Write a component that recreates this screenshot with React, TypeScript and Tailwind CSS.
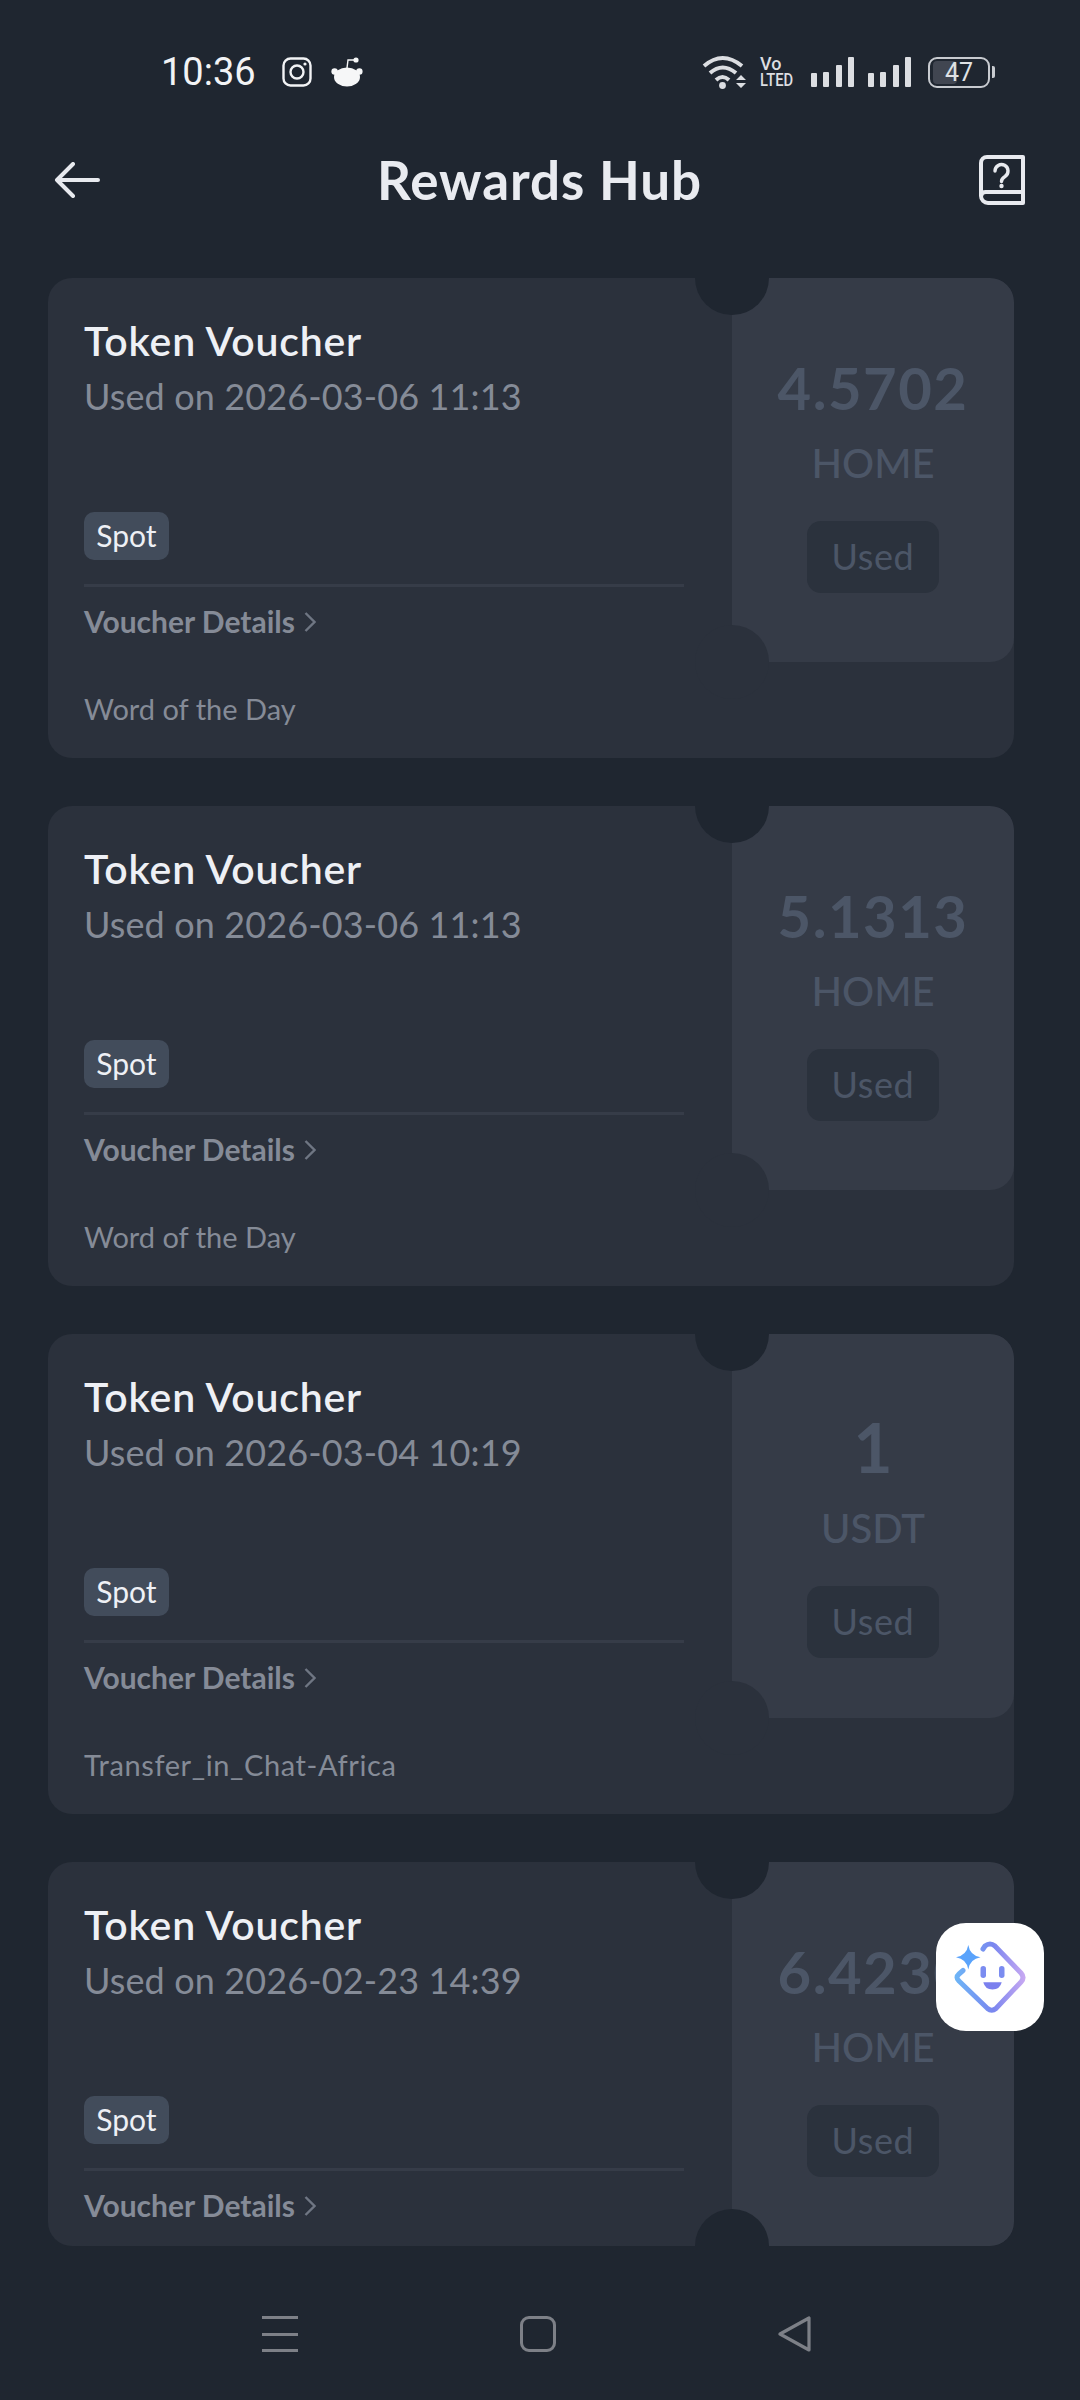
const vouchers = [
  { amount: "4.5702", token: "HOME", date: "2026-03-06 11:13", source: "Word of the Day" },
  { amount: "5.1313", token: "HOME", date: "2026-03-06 11:13", source: "Word of the Day" },
  { amount: "1", token: "USDT", date: "2026-03-04 10:19", source: "Transfer_in_Chat-Africa", big: true, sourceTracking: "tracking-[0.6px]" },
  { amount: "6.4230", token: "HOME", date: "2026-02-23 14:39" },
];

function Signal() {
  return (
    <div className="flex h-[30px] w-[43px] items-end justify-between">
      <div className="h-[14px] w-[6px] rounded-[1px] bg-[#dcdee2]" />
      <div className="h-[15px] w-[6px] rounded-[1px] bg-[#dcdee2]" />
      <div className="h-[22px] w-[6px] rounded-[1px] bg-[#dcdee2]" />
      <div className="h-[30px] w-[6px] rounded-[1px] bg-[#dcdee2]" />
    </div>
  );
}

function StatusBar() {
  return (
    <div className="flex h-[126px] items-start justify-between pl-[161px] pr-[85px] pt-[57px]">
      <div className="flex h-[30px] items-center">
        <span className="font-['Roboto',sans-serif] text-[38px] leading-[30px] text-[#f2f3f5]">10:36</span>
        <svg className="ml-[26px]" width="30" height="30" viewBox="0 0 30 30" fill="none" stroke="#f2f3f5" strokeWidth="2.4">
          <rect x="1.5" y="1.5" width="27" height="27" rx="7" />
          <circle cx="15" cy="15" r="6.5" />
          <circle cx="23" cy="7" r="1.6" fill="#f2f3f5" stroke="none" />
        </svg>
        <svg className="ml-[19px]" width="32" height="30" viewBox="0 0 32 30" fill="#f6f7f8">
          <ellipse cx="16" cy="20" rx="13" ry="9.5" />
          <circle cx="3.6" cy="14.5" r="3.2" />
          <circle cx="28.4" cy="14.5" r="3.2" />
          <circle cx="25" cy="3" r="2.6" />
          <path d="M16 11 L17 3 L24 3" fill="none" stroke="#f6f7f8" strokeWidth="1.4" />
        </svg>
      </div>
      <div className="flex h-[30px] items-center">
        <svg width="45" height="34" viewBox="0 0 45 34" fill="none" stroke="#dcdee2" strokeWidth="4">
          <path d="M2 11 Q20.5 -5 40 11" />
          <path d="M8 18 Q20.5 7 34 18" />
          <path d="M14 25 Q20.5 19 27 25" />
          <circle cx="20.5" cy="30.5" r="3.4" fill="#dcdee2" stroke="none" />
          <path d="M34 25 L39 20 L44 25 Z M34 28 L44 28 L39 33 Z" fill="#dcdee2" stroke="none" />
        </svg>
        <div className="ml-[13px] flex h-[32px] w-[35px] flex-col font-['Roboto',sans-serif] text-[18px] font-medium leading-[16px] text-[#dcdee2]">
          <span>Vo</span>
          <span className="origin-left scale-x-[0.82] whitespace-nowrap">LTED</span>
        </div>
        <div className="ml-[16px]">
          <Signal />
        </div>
        <div className="ml-[14px]">
          <Signal />
        </div>
        <div className="relative ml-[17px] flex h-[31px] w-[62px] items-center justify-center overflow-hidden rounded-[9px] border-2 border-[#c8cbd0]">
          <div className="absolute bottom-[2px] left-[3px] top-[2px] w-[24px] rounded-[4px] bg-[#414651]" />
          <span className="relative font-['Roboto',sans-serif] text-[25px] leading-none text-[#dfe1e4]">47</span>
        </div>
        <div className="ml-[2px] h-[12px] w-[3px] rounded-r-[2px] bg-[#c8cbd0]" />
      </div>
    </div>
  );
}

function Header() {
  return (
    <div className="flex h-[108px] items-center justify-between pl-[54px] pr-[55px]">
      <svg width="46" height="36" viewBox="0 0 46 36" fill="none" stroke="#e8eaef" strokeWidth="4" strokeLinecap="round" strokeLinejoin="round">
        <path d="M3 18 H44 M19 2 L3 18 L19 34" />
      </svg>
      <h1 className="pb-[2px] text-[53px] font-bold leading-none tracking-[0.9px] text-[#e9ebf0]">Rewards Hub</h1>
      <svg width="46" height="50" viewBox="0 0 46 50" fill="none" stroke="#e8eaef" strokeWidth="4" strokeLinejoin="round" strokeLinecap="round">
        <path d="M2 41 V8 a6 6 0 0 1 6 -6 H44 V48 H9 a7 7 0 0 1 -7 -7 a5 5 0 0 1 5 -4 H44" />
        <path d="M16 16 a6.5 6.5 0 1 1 10 5.5 c-2.5 1.5 -3.5 2.5 -3.5 5" strokeWidth="3.4" />
        <circle cx="22.5" cy="31" r="2.2" fill="#e8eaef" stroke="none" />
      </svg>
    </div>
  );
}

function VoucherCard({ amount, token, date, source, big, sourceTracking }: { amount: string; token: string; date: string; source?: string; big?: boolean; sourceTracking?: string }) {
  return (
    <div className="relative shrink-0 overflow-hidden rounded-[24px] bg-[#2b313c]">
      <div className="flex h-[384px]">
        <div className="w-[684px] pl-[36px]">
          <div className="pt-[39px] text-[41px] font-semibold leading-[48px] tracking-[0.8px] text-[#eef0f5]">Token Voucher</div>
          <div className="mt-[9px] text-[36px] leading-[44px] tracking-[0.12px] text-[#858b97]">Used on {date}</div>
          <div className="mt-[94px] flex h-[48px] w-[85px] items-center justify-center rounded-[10px] bg-[#424c5b] pb-[2px] text-[30px] leading-none text-[#eef0f5]">
            Spot
          </div>
          <div className="mt-[24px] h-[3px] w-[600px] bg-[#363c48]" />
          <div className="mt-[17px] flex h-[36px] items-center text-[30px] font-bold leading-none text-[#858b97]">
            <span className="pb-[2px]">Voucher Details</span>
            <svg className="ml-[9px]" width="12" height="20" viewBox="0 0 12 20" fill="none" stroke="#6f7683" strokeWidth="2.4">
              <path d="M1.5 1 L10.5 10 L1.5 19" />
            </svg>
          </div>
        </div>
        <div className="flex w-[282px] flex-col items-center rounded-r-[24px] bg-[#353b47] text-[#4c5667]">
          <div className={big ? "pt-[76px] text-[68px] font-bold leading-[73px]" : "pt-[80px] text-[58px] font-bold leading-[60px] tracking-[1.5px]"}>{amount}</div>
          <div className="mt-[21px] text-[40px] font-medium leading-[48px]">{token}</div>
          <div className="mt-[34px] flex h-[72px] w-[132px] items-center justify-center rounded-[14px] bg-[#2b323d] pb-[2px] text-[36px] leading-none tracking-[0.6px]">
            Used
          </div>
        </div>
      </div>
      {source ? (
        <div className={`flex h-[96px] items-center pb-[3px] pl-[36px] text-[29px] leading-none text-[#858b97] ${sourceTracking ?? ""}`}>{source}</div>
      ) : null}
      {/* ticket notches */}
      <div className="absolute left-[647px] top-[-37px] h-[74px] w-[74px] rounded-full bg-[#1f2630]" />
      <div className={source ? "absolute left-[647px] top-[347px] h-[74px] w-[74px] rounded-full bg-[#2b313c]" : "absolute left-[647px] top-[347px] h-[74px] w-[74px] rounded-full bg-[#1f2630]"} />
    </div>
  );
}

function AssistantButton() {
  return (
    <div className="absolute left-[936px] top-[1923px] h-[108px] w-[108px] rounded-[30px] bg-white">
      <svg width="108" height="108" viewBox="0 0 108 108" fill="none">
        <defs>
          <linearGradient id="face" x1="20" y1="54" x2="88" y2="54" gradientUnits="userSpaceOnUse">
            <stop offset="0" stopColor="#6db4f6" />
            <stop offset="0.55" stopColor="#7a86ef" />
            <stop offset="1" stopColor="#c6a8f2" />
          </linearGradient>
        </defs>
        <path
          d="M27 47.5 L23 51 Q19 54.5 23 58 L51.5 85.5 Q55.7 89 60 85.5 L85 59 Q89 54.5 85 50 L59 23 Q54 19 49 23 L47 26"
          stroke="url(#face)"
          strokeWidth="5"
          strokeLinecap="round"
        />
        <path d="M32.3 22 Q34 32.5 44.5 34.3 Q34 36 32.3 46.5 Q30.5 36 20 34.3 Q30.5 32.5 32.3 22 Z" fill="#5aa3fb" />
        <rect x="44.5" y="43" width="5.5" height="12" rx="2.75" fill="#7b8cf0" />
        <rect x="63" y="43" width="5.5" height="12" rx="2.75" fill="#7b8cf0" />
        <path d="M47.3 59.3 H65.7 Q64 66.5 56.5 66.5 Q49 66.5 47.3 59.3 Z" fill="#7b80ee" />
      </svg>
    </div>
  );
}

function NavBar() {
  return (
    <div className="flex flex-1 items-start justify-between pl-[262px] pr-[267px] pt-[70px]">
      <div className="flex h-[36px] w-[36px] flex-col justify-between">
        <div className="h-[3px] bg-[#7d8087]" />
        <div className="h-[3px] bg-[#7d8087]" />
        <div className="h-[3px] bg-[#7d8087]" />
      </div>
      <div className="h-[36px] w-[36px] rounded-[9px] border-[3px] border-[#7d8087]" />
      <svg width="36" height="36" viewBox="0 0 36 36" fill="none" stroke="#7d8087" strokeWidth="3.2" strokeLinejoin="round">
        <path d="M3 18 L32 2 V34 Z" />
      </svg>
    </div>
  );
}

export default function App() {
  return (
    <div className="relative flex h-[2400px] w-[1080px] flex-col overflow-hidden bg-[#1f2630] font-['Lato',sans-serif]">
      <StatusBar />
      <Header />
      <div className="flex h-[2012px] flex-col gap-[48px] overflow-hidden pl-[48px] pr-[66px] pt-[44px]">
        {vouchers.map((v, i) => (
          <VoucherCard key={i} {...v} />
        ))}
      </div>
      <NavBar />
      <AssistantButton />
    </div>
  );
}
